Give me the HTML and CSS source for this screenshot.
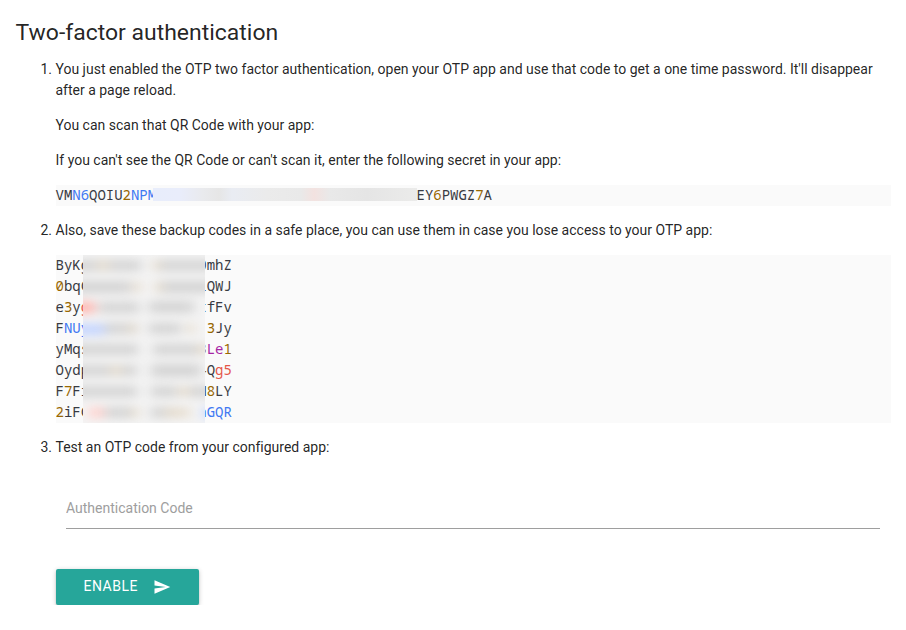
FILE: index.html
```html
<!DOCTYPE html>
<html lang="en">
<head>
<meta charset="utf-8">
<title>Two-factor authentication</title>
<link rel="stylesheet" href="styles.css">
</head>
<body>
<main>
<h1>Two-factor authentication</h1>
<ol>
<li>
<p>You just enabled the OTP two factor authentication, open your OTP app and use that code to get a one time password. It'll disappear after a page reload.</p>
<p>You can scan that QR Code with your app:</p>
<p>If you can't see the QR Code or can't scan it, enter the following secret in your app:</p>
<div class="code"><div class="line"><span>VM<b class="blue">N6</b>QOIU<b class="gold">2</b><b class="blue">NPM</b></span><span class="tail">EY<b class="gold">6</b>PWGZ<b class="gold">7</b>A</span></div>
<div class="mask secret-mask"></div></div>
</li>
<li>
<p>Also, save these backup codes in a safe place, you can use them in case you lose access to your OTP app:</p>
<div class="code codes">
<div class="line"><span>ByKg</span><span>0mhZ</span></div>
<div class="line"><span><b class="gold">0</b>bqC</span><span>1QWJ</span></div>
<div class="line"><span>e<b class="gold">3</b>y<b class="red">g</b></span><span>tfFv</span></div>
<div class="line"><span>F<b class="blue">NUy</b></span><span><b class="gold">3</b>Jy</span></div>
<div class="line"><span>yMqs</span><span><b class="gold">3</b><b class="purple">Le</b><b class="gold">1</b></span></div>
<div class="line"><span>Oydp</span><span><b class="gold">4</b>Q<b class="red">g5</b></span></div>
<div class="line"><span>F<b class="gold">7</b>Fi</span><span>N<b class="gold">8</b>LY</span></div>
<div class="line"><span><b class="gold">2</b>iFC</span><span><b class="blue">hGQR</b></span></div>
<svg class="mask codes-mask" viewBox="0 0 122 168">
<defs><filter id="soft" x="-30%" y="-30%" width="160%" height="160%" color-interpolation-filters="sRGB"><feGaussianBlur stdDeviation="6 5"/></filter></defs>
<rect width="122" height="168" fill="#f4f4f4"/>
<g filter="url(#soft)" fill="#d4d4d4">
<path d="M-10 5h68v11h-68zM72 5h60v11h-60zM-10 26h58v12h-58zM76 26h56v12h-56zM16 47h40v11h-40zM66 46h45v12h-45zM20 68h35v11h-35zM66 68h32v11h-32zM-10 89h65v11h-65zM70 89h48v11h-48zM-10 110h64v11h-64zM68 109h50v13h-50zM-10 131h64v11h-64zM68 131h26v11h-26zM106 131h26v11h-26zM22 152h28v11h-28zM68 152h25v11h-25z"/>
<path fill="#e6dccd" d="M14 6h12v9h-12zM70 6h8v9h-8zM50 27h8v10h-8zM72 27h8v10h-8zM45 69h8v9h-8zM104 69h8v9h-8zM114 90h12v9h-12zM27 111h12v9h-12zM95 132h12v9h-12zM48 153h8v9h-8zM82 153h25v9h-25z"/>
<path fill="#ffb4ae" d="M-8 47h20v11H-8z"/>
<path fill="#ffd2ce" d="M6 152h15v11H6z"/>
<path fill="#c3d4ff" d="M-10 69h32v11h-32zM120 153h12v10h-12z"/>
</g>
</svg>
</div>
</li>
<li>
<p>Test an OTP code from your configured app:</p>
<form>
<input type="text" placeholder="Authentication Code" aria-label="Authentication Code">
<button type="button"><span>Enable</span><svg viewBox="0 0 24 24" aria-hidden="true"><path d="M2.01 21L23 12 2.01 3 2 10l15 2-15 2z"/></svg></button>
</form>
</li>
</ol>
</main>
</body>
</html>
```
FILE: styles.css
```css
* { box-sizing: border-box; }
body {
  margin: 0;
  background: #fff;
  color: rgba(0, 0, 0, .87);
  font: 14px/21px Roboto, sans-serif;
}
main { padding: 17px 15px 0 15.5px; }
h1 { margin: 0 0 10px; font-size: 22.96px; line-height: 32px; font-weight: 400; }
ol { margin: 0; padding-left: 40px; }
p { margin: 0 0 14px; letter-spacing: -.004px; }
.code {
  position: relative;
  margin-bottom: 14px;
  background: #fafafa;
  color: #383a42;
  font-family: "Noto Sans Mono", "DejaVu Sans Mono", monospace;
}
.line { display: flex; height: 21px; line-height: 19px; white-space: pre; letter-spacing: -.02px; }
.line .tail { margin-left: auto; margin-right: 399px; }
.codes .line { width: 176.3px; justify-content: space-between; }
b { font-weight: 400; }
.blue { color: #4078f2; }
.gold { color: #986801; }
.red { color: #e45649; }
.purple { color: #a626a4; }
.mask { position: absolute; }
.secret-mask {
  left: 97.5px;
  top: 3px;
  width: 264px;
  height: 13px;
  background: linear-gradient(90deg, #e8edfb, #e9edfb 10%, #e9eaed 19%, #e6e6e6 25%, #e9ecf3 30%, #ebebeb 43%, #e9e9e9 56%, #f3e2e0 61%, #e9e9e9 67%, #e5e5e5 81%, #ebebea);
}
.codes-mask { left: 27.5px; top: 0; width: 122px; height: 168px; overflow: hidden; }
input {
  display: block;
  width: calc(100% - 21.5px);
  height: 42px;
  margin: 29px 0 40px 10.5px;
  padding: 0;
  border: 0;
  border-bottom: 1px solid #9e9e9e;
  outline: 0;
  background: transparent;
  font: inherit;
}
input::placeholder { color: #9e9e9e; opacity: 1; }
button {
  display: flex;
  align-items: center;
  justify-content: space-between;
  width: 143px;
  height: 36px;
  padding: 0 28px 0 28px;
  border: 0;
  border-radius: 2px;
  background: #26a69a;
  box-shadow: 0 2px 2px rgba(0,0,0,.14), 0 3px 1px -2px rgba(0,0,0,.12), 0 1px 5px rgba(0,0,0,.2);
  color: #fff;
  font: 14px/34px Roboto, sans-serif;
  letter-spacing: .5px;
  text-transform: uppercase;
}
button span { height: 36px; }
button svg { width: 18px; height: 18px; fill: currentColor; }
```
